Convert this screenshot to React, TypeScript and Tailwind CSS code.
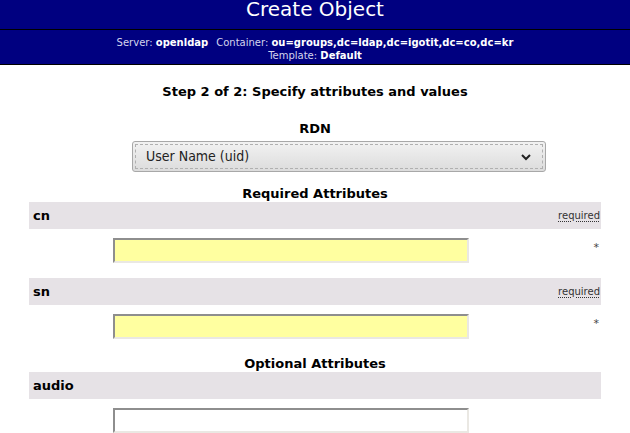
export default function App() {
  const font = { fontFamily: '"DejaVu Sans", Verdana, sans-serif' }

  const AttrRow = ({ name, required }: { name: string; required?: boolean }) => (
    <div className="flex h-[27px] items-center justify-between bg-[#e6e2e6] pl-[4px] pr-[1px]">
      <span className="text-[13px] font-bold text-black">{name}</span>
      {required && (
        <span className="text-[10px] text-[#333] underline decoration-dotted underline-offset-2">required</span>
      )}
    </div>
  )

  const InputRow = ({ required }: { required?: boolean }) => (
    <div className="flex items-start pl-[84px] pt-[9px] pb-[15px]">
      <div
        className={`h-[25px] w-[356px] border-2 border-t-[#8e8e8e] border-l-[#8e8e8e] border-r-[#eae8e3] border-b-[#eae8e3] ${
          required ? "bg-[#ffffa0]" : "bg-white"
        }`}
      />
      <div className="flex-1 pt-[2px] pr-[2px] text-right text-[11px] text-[#444]">{required ? "*" : ""}</div>
    </div>
  )

  return (
    <div className="h-[433px] w-[630px] overflow-hidden bg-white text-black" style={font}>
      <div className="h-[30px] bg-[#000080] text-center text-[20px] leading-[20px] text-white">
        <div className="-mt-px">Create Object</div>
      </div>
      <div className="h-px bg-black" />
      <div className="h-[34px] bg-[#000080] pt-[6px] text-center text-[10px] leading-[13px] text-[#d4d4ee]">
        <div>
          Server: <b className="text-white">openldap</b>
          <span className="ml-[8px]">Container: </span>
          <b className="text-white">ou=groups,dc=ldap,dc=igotit,dc=co,dc=kr</b>
        </div>
        <div>
          Template: <b className="text-white">Default</b>
        </div>
      </div>
      <div className="h-px bg-black" />

      <div className="pt-[19px] text-center text-[13px] font-bold leading-[16px]">
        Step 2 of 2: Specify attributes and values
      </div>
      <div className="pt-[21px] text-center text-[13px] font-bold leading-[16px]">RDN</div>
      <div className="mt-[4px] pl-[132px]">
        <div className="flex h-[31px] w-[414px] items-center justify-between rounded-[3px] border border-[#a8a8a8] bg-gradient-to-b from-[#f2f2f2] to-[#dcdcdc] p-[2px]">
          <div className="flex h-full w-full items-center justify-between border border-dashed border-[#b0b0b0] pl-[10px] pr-[10px]">
            <span
              className="text-[14px] text-[#222] font-stretch-condensed"
              style={{ fontFamily: '"DejaVu Sans Condensed", "DejaVu Sans", sans-serif' }}
            >
              User Name (uid)
            </span>
            <svg width="12" height="8" viewBox="0 0 12 8">
              <path d="M2 2 L6 6 L10 2" fill="none" stroke="#222" strokeWidth="2" />
            </svg>
          </div>
        </div>
      </div>

      <div className="mx-auto w-[572px]">
        <div className="pt-[14px] text-center text-[13px] font-bold leading-[16px]">Required Attributes</div>
        <AttrRow name="cn" required />
        <InputRow required />
        <AttrRow name="sn" required />
        <InputRow required />
        <div className="-mt-[13px] pt-[15px] text-center text-[13px] font-bold leading-[16px]">Optional Attributes</div>
        <AttrRow name="audio" />
        <InputRow />
      </div>
    </div>
  )
}
